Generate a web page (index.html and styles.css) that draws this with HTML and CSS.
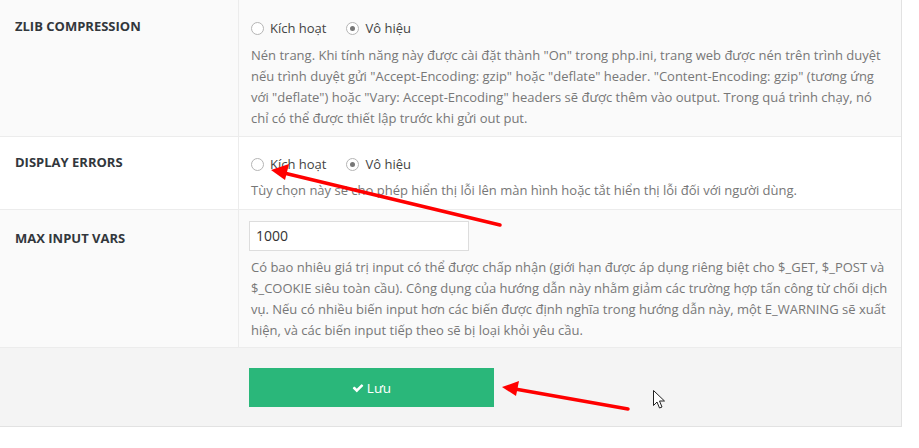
FILE: index.html
```html
<!DOCTYPE html>
<html lang="vi">
<head>
<meta charset="utf-8">
<link rel="stylesheet" href="styles.css">
</head>
<body>
<div class="panel">
  <div class="row row-alt row-zlib">
    <div class="label">ZLIB COMPRESSION</div>
    <div class="field">
      <div class="radios">
        <span class="radio"><span class="dot"></span>Kích hoạt</span>
        <span class="radio checked"><span class="dot"></span>Vô hiệu</span>
      </div>
      <p class="desc">Nén trang. Khi tính năng này được cài đặt thành "On" trong php.ini, trang web được nén trên trình duyệt nếu trình duyệt gửi "Accept-Encoding: gzip" hoặc "deflate" header. "Content-Encoding: gzip" (tương ứng với "deflate") hoặc "Vary: Accept-Encoding" headers sẽ được thêm vào output. Trong quá trình chạy, nó chỉ có thể được thiết lập trước khi gửi out put.</p>
    </div>
  </div>
  <div class="row row-display">
    <div class="label">DISPLAY ERRORS</div>
    <div class="field">
      <div class="radios">
        <span class="radio"><span class="dot"></span>Kích hoạt</span>
        <span class="radio checked"><span class="dot"></span>Vô hiệu</span>
      </div>
      <p class="desc">Tùy chọn này sẽ cho phép hiển thị lỗi lên màn hình hoặc tắt hiển thị lỗi đối với người dùng.</p>
    </div>
  </div>
  <div class="row row-alt row-vars">
    <div class="label">MAX INPUT VARS</div>
    <div class="field">
      <div class="input">1000</div>
      <p class="desc">Có bao nhiêu giá trị input có thể được chấp nhận (giới hạn được áp dụng riêng biệt cho $_GET, $_POST và $_COOKIE siêu toàn cầu). Công dụng của hướng dẫn này nhằm giảm các trường hợp tấn công từ chối dịch vụ. Nếu có nhiều biến input hơn các biến được định nghĩa trong hướng dẫn này, một E_WARNING sẽ xuất hiện, và các biến input tiếp theo sẽ bị loại khỏi yêu cầu.</p>
    </div>
  </div>
  <div class="footer">
    <button class="save"><svg class="check" viewBox="0 0 1792 1792" width="12" height="12"><path fill="#fff" d="M1671 566q0 40-28 68l-724 724-136 136q-28 28-68 28t-68-28l-136-136-362-362q-28-28-28-68t28-68l136-136q28-28 68-28t68 28l294 295 656-657q28-28 68-28t68 28l136 136q28 28 28 68z"/></svg>Lưu</button>
  </div>
</div>

<svg class="overlay" width="919" height="448" viewBox="0 0 919 448">
  <line x1="500" y1="225" x2="284" y2="173" stroke="#f00" stroke-width="3.5" stroke-linecap="round"/>
  <polygon points="271,170 289,164 285,180" fill="#f00"/>
  <line x1="628" y1="409" x2="515" y2="389" stroke="#f00" stroke-width="3.5" stroke-linecap="round"/>
  <polygon points="502,387 519,381 516,396" fill="#f00"/>
  <path d="M653.5 390.5 L653.5 405.5 L657 402 L659.5 408 L662 407 L659.5 401 L664.5 401 Z" fill="#fff" stroke="#222" stroke-width="1" stroke-linejoin="round"/>
</svg>
</body>
</html>
```
FILE: styles.css
```css
html, body {
  margin: 0;
  padding: 0;
  background: #fff;
}
body {
  font-family: "Open Sans", "Noto Sans", sans-serif;
  font-size: 13px;
  color: #444;
  position: relative;
  width: 919px;
  height: 448px;
  overflow: hidden;
}
.panel {
  width: 901px;
  border-right: 1px solid #e2e2e2;
}
.row {
  display: grid;
  grid-template-columns: 239px 1fr;
  background: #fff;
  border-bottom: 1px solid #ececec;
}
.row-alt {
  background: #fafafa;
}
.label {
  border-right: 1px solid #ececec;
  padding: 16px 0 0 15px;
  font-weight: 700;
  font-size: 13px;
  line-height: 20px;
  color: #32373c;
}
.field {
  padding: 18px 12px 7px 12px;
}
.radios {
  display: flex;
  gap: 20px;
  line-height: 21px;
  color: #444;
}
.radio {
  display: inline-flex;
  align-items: center;
  gap: 6px;
}
.dot {
  width: 11px;
  height: 11px;
  border: 1px solid #b5b5b5;
  border-radius: 50%;
  background: #fff;
  display: inline-flex;
  align-items: center;
  justify-content: center;
}
.radio.checked .dot::after {
  content: "";
  width: 5px;
  height: 5px;
  border-radius: 50%;
  background: #777;
}
.desc {
  margin: 6px 0 0;
  line-height: 21px;
  color: #777;
}
.row-display .label {
  padding-top: 15px;
}
.row-display .field {
  padding-top: 17px;
  padding-bottom: 8px;
}
.row-display .desc {
  margin-top: 5px;
}
.row-vars .label {
  padding-top: 18px;
}
.row-vars .field {
  padding-top: 11px;
  padding-bottom: 6px;
}
.row-vars .desc {
  margin-top: 6px;
}
.input {
  box-sizing: border-box;
  width: 220px;
  height: 30px;
  margin-left: -2px;
  border: 1px solid #ddd;
  background: #fff;
  padding: 0 6px;
  line-height: 28px;
  font-size: 14px;
  color: #333;
}
.footer {
  background: #f4f4f4;
  border-bottom: 1px solid #e2e2e2;
  height: 79px;
  padding: 20px 0 0 249px;
  box-sizing: border-box;
}
.save {
  width: 245px;
  height: 39px;
  border: 0;
  border-radius: 0;
  background: #2ab77a;
  color: #fff;
  font-family: "Open Sans", "Noto Sans", sans-serif;
  font-size: 13.5px;
  display: flex;
  align-items: center;
  justify-content: center;
  gap: 3px;
  padding: 0;
}
.check {
  display: block;
}
.overlay {
  position: absolute;
  left: 0;
  top: 0;
  pointer-events: none;
}
```
